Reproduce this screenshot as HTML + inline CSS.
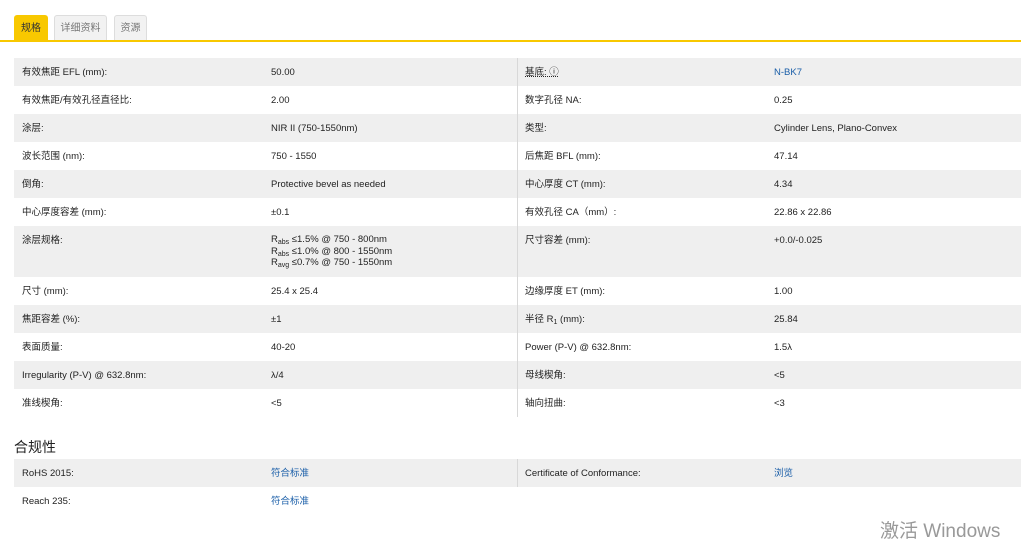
<!DOCTYPE html>
<html><head><meta charset="utf-8"><style>
*{margin:0;padding:0;box-sizing:border-box}
body{width:1021px;height:542px;background:#fff;font-family:"Liberation Sans","Noto Sans CJK SC",sans-serif;font-size:9.5px;color:#222;position:relative;overflow:hidden}
.tab{position:absolute;top:15px;height:25px;border:1px solid #ddd;border-bottom:none;border-radius:3px 3px 0 0;background:#f2f2f2;color:#777;font-size:10px;line-height:25px;text-align:center}
.tab.on{background:#f8c800;border-color:#f8c800;color:#333}
.line{position:absolute;top:40px;left:0;width:1021px;height:2px;background:#f8c800}
.row{position:absolute;left:14px;width:1007px;height:28px}
.g{background:#efefef}
.row span{position:absolute;top:1px;height:28px;line-height:28px;white-space:nowrap}
.c1{left:8px}.c2{left:257px}.c3{left:511px}.c4{left:760px}
.dv{position:absolute;left:503px;top:0;bottom:0;width:1px;background:#d8d8d8}
a{color:#1a5ea8;text-decoration:none}
sub{font-size:7px;vertical-align:-2px;line-height:0}
h3{position:absolute;left:14px;top:437px;font-size:14px;font-weight:normal;color:#222}
.wm{position:absolute;left:880px;top:516px;font-size:19px;color:#999}
</style></head><body>
<div class="tab on" style="left:14px;width:34px">规格</div>
<div class="tab" style="left:54px;width:53px">详细资料</div>
<div class="tab" style="left:114px;width:33px">资源</div>
<div class="line"></div>

<div class="row g" style="top:58px"><div class="dv"></div><span class="c1">有效焦距 EFL (mm):</span><span class="c2">50.00</span><span class="c3"><u style="text-decoration:underline dotted">基底: ⓘ</u></span><span class="c4"><a>N-BK7</a></span></div>
<div class="row" style="top:86px"><div class="dv"></div><span class="c1">有效焦距/有效孔径直径比:</span><span class="c2">2.00</span><span class="c3">数字孔径 NA:</span><span class="c4">0.25</span></div>
<div class="row g" style="top:114px"><div class="dv"></div><span class="c1">涂层:</span><span class="c2">NIR II (750-1550nm)</span><span class="c3">类型:</span><span class="c4">Cylinder Lens, Plano-Convex</span></div>
<div class="row" style="top:142px"><div class="dv"></div><span class="c1">波长范围 (nm):</span><span class="c2">750 - 1550</span><span class="c3">后焦距 BFL (mm):</span><span class="c4">47.14</span></div>
<div class="row g" style="top:170px"><div class="dv"></div><span class="c1">倒角:</span><span class="c2">Protective bevel as needed</span><span class="c3">中心厚度 CT (mm):</span><span class="c4">4.34</span></div>
<div class="row" style="top:198px"><div class="dv"></div><span class="c1">中心厚度容差 (mm):</span><span class="c2">±0.1</span><span class="c3">有效孔径 CA（mm）:</span><span class="c4">22.86 x 22.86</span></div>
<div class="row g" style="top:226px;height:51px"><div class="dv"></div><span class="c1">涂层规格:</span><span class="c2" style="line-height:11.5px;top:8px;height:auto">R<sub>abs</sub> ≤1.5% @ 750 - 800nm<br>R<sub>abs</sub> ≤1.0% @ 800 - 1550nm<br>R<sub>avg</sub> ≤0.7% @ 750 - 1550nm</span><span class="c3">尺寸容差 (mm):</span><span class="c4">+0.0/-0.025</span></div>
<div class="row" style="top:277px"><div class="dv"></div><span class="c1">尺寸 (mm):</span><span class="c2">25.4 x 25.4</span><span class="c3">边缘厚度 ET (mm):</span><span class="c4">1.00</span></div>
<div class="row g" style="top:305px"><div class="dv"></div><span class="c1">焦距容差 (%):</span><span class="c2">±1</span><span class="c3">半径 R<sub>1</sub> (mm):</span><span class="c4">25.84</span></div>
<div class="row" style="top:333px"><div class="dv"></div><span class="c1">表面质量:</span><span class="c2">40-20</span><span class="c3">Power (P-V) @ 632.8nm:</span><span class="c4">1.5λ</span></div>
<div class="row g" style="top:361px"><div class="dv"></div><span class="c1">Irregularity (P-V) @ 632.8nm:</span><span class="c2">λ/4</span><span class="c3">母线楔角:</span><span class="c4">&lt;5</span></div>
<div class="row" style="top:389px"><div class="dv"></div><span class="c1">准线楔角:</span><span class="c2">&lt;5</span><span class="c3">轴向扭曲:</span><span class="c4">&lt;3</span></div>

<h3>合规性</h3>
<div class="row g" style="top:459px"><div class="dv"></div><span class="c1">RoHS 2015:</span><span class="c2"><a>符合标准</a></span><span class="c3">Certificate of Conformance:</span><span class="c4"><a>浏览</a></span></div>
<div class="row" style="top:487px"><span class="c1">Reach 235:</span><span class="c2"><a>符合标准</a></span></div>
<div class="wm">激活 Windows</div>
</body></html>
